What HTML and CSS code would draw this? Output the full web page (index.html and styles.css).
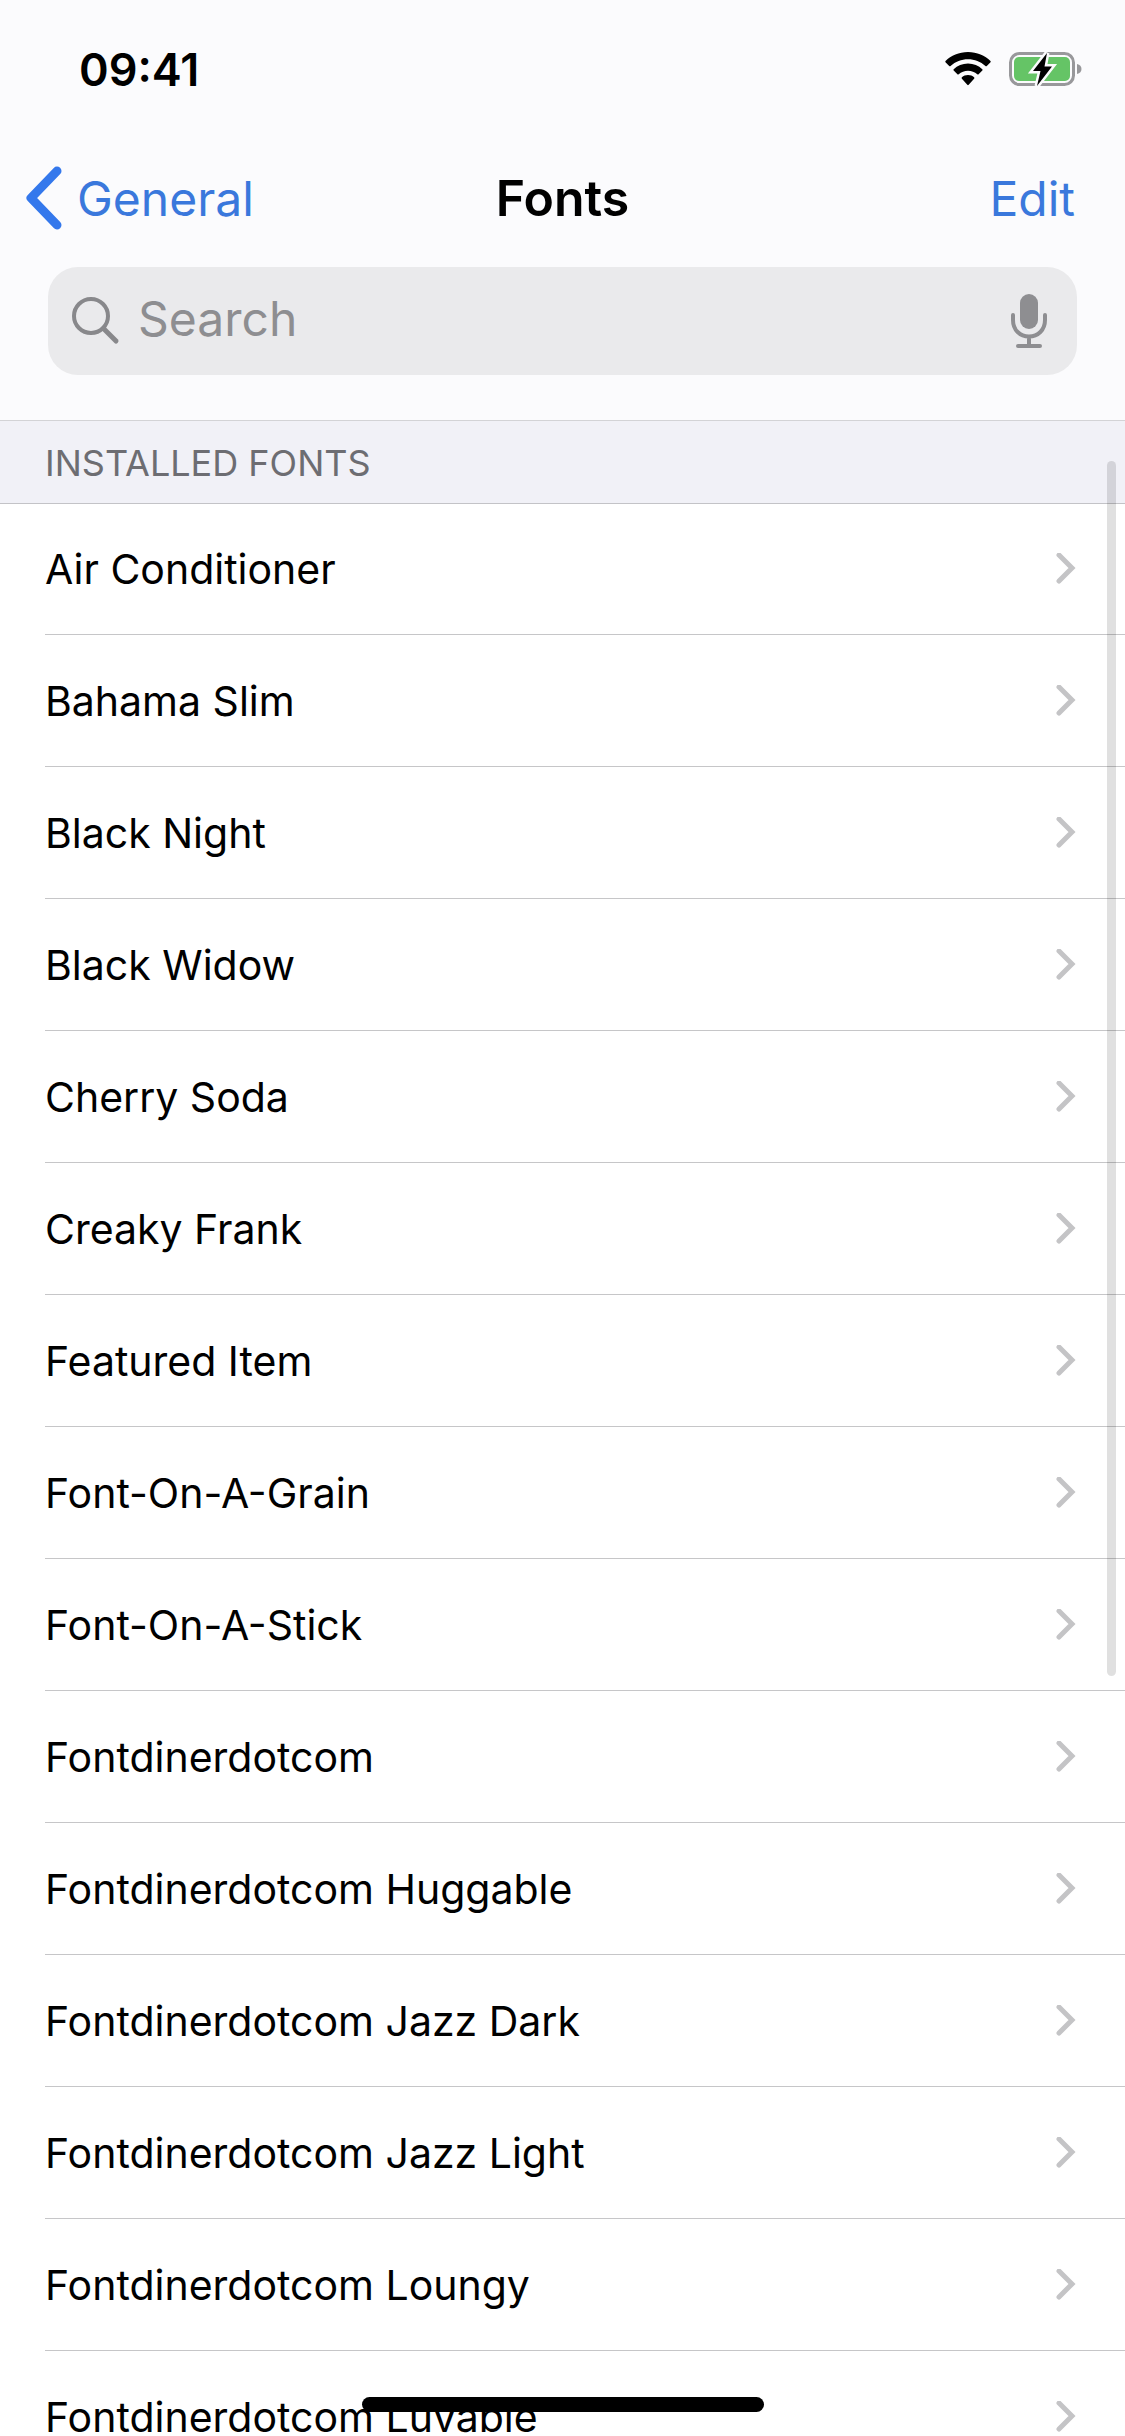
FILE: index.html
```html
<!DOCTYPE html>

<html lang="en">

<head>
    <meta charset="utf-8">
    <meta name="viewport" content="width=device-width, initial-scale=1">
    <title>Fonts</title>
    <link rel="stylesheet" href="styles.css">
</head>

<body>

    <svg class="hidden" width="0" height="0">
        <symbol id="chevron" viewBox="0 0 20 32">
            <path d="M3 2 L16 15 L3 28" fill="none" stroke="currentColor" stroke-width="5" stroke-linecap="round" />
        </symbol>
    </svg>

    <div class="screen">

        <header>
            <div class="status">
                <span class="time">09:41</span>
                <div class="status-icons">
                    <svg class="wifi" viewBox="0 0 46 34">
                        <path d="M23 0 C14 0 6 3.500 .5 9 Q0 9.700 .5 10.300 L4.200 14 Q4.900 14.600 5.600 14 C10.400 9.700 16.400 7.300 23 7.300 S35.600 9.700 40.400 14 Q41.100 14.600 41.800 14 L45.500 10.300 Q46 9.700 45.500 9 C40 3.500 32 0 23 0Z" />
                        <path d="M23 11.500 C17.400 11.500 12.400 13.600 8.700 17.200 Q8 17.900 8.700 18.600 L12.400 22.200 Q13 22.800 13.700 22.200 C16.300 20 19.500 18.800 23 18.800 S29.700 20 32.300 22.200 Q33 22.800 33.600 22.200 L37.300 18.600 Q38 17.900 37.300 17.200 C33.600 13.600 28.600 11.500 23 11.500Z" />
                        <path d="M23 23 C20.500 23 18.500 23.900 16.900 25.300 Q16.200 26 16.900 26.700 L22.300 32.800 Q23 33.500 23.700 32.800 L29.100 26.700 Q29.800 26 29.100 25.300 C27.500 23.900 25.500 23 23 23Z" />
                    </svg>
                    <svg class="battery" viewBox="0 0 74 36">
                        <rect x="1.500" y="2.500" width="63" height="31" rx="9" fill="none" stroke="#98989b" stroke-width="3" />
                        <path d="M68 13 C74 14 74 22 68 23Z" fill="#98989b" />
                        <rect x="5" y="6" width="56" height="24" rx="5" fill="#65c466" />
                        <path class="bolt" d="M38 2 L24 20 H31.500 L28 35 L43 15.500 H35.500Z" />
                    </svg>
                </div>
            </div>

            <nav>
                <a href="#general" class="back">
                    <svg class="back-arrow" viewBox="0 0 38 64">
                        <path d="M32 5 L6 32 L32 59" fill="none" stroke="#3478ec" stroke-width="9" stroke-linecap="round" stroke-linejoin="round" />
                    </svg>
                    <span>General</span>
                </a>
                <h1>Fonts</h1>
                <button type="button" class="edit">Edit</button>
            </nav>

            <form class="search">
                <svg class="search-icon" viewBox="0 0 48 48">
                    <circle cx="19" cy="19" r="17" fill="none" stroke="currentColor" stroke-width="4" />
                    <path d="M31.500 31.500 L44 44" stroke="currentColor" stroke-width="5" stroke-linecap="round" />
                </svg>
                <input type="text" name="search" placeholder="Search" aria-label="Search">
                <button type="button" class="mic" aria-label="Dictate">
                    <svg viewBox="0 0 36 54">
                        <rect x="9" y="0" width="18" height="35" rx="9" fill="currentColor" />
                        <path d="M2 21 V26 C2 36 9 42.500 18 42.500 S34 36 34 26 V21 M18 43 V52 M7 52 H29" fill="none" stroke="currentColor" stroke-width="4" stroke-linecap="round" />
                    </svg>
                </button>
            </form>
        </header>

        <main>
            <h2>INSTALLED FONTS</h2>
            <ul class="fonts">
                <li><a href="#">Air Conditioner <svg><use href="#chevron" /></svg></a></li>
                <li><a href="#">Bahama Slim <svg><use href="#chevron" /></svg></a></li>
                <li><a href="#">Black Night <svg><use href="#chevron" /></svg></a></li>
                <li><a href="#">Black Widow <svg><use href="#chevron" /></svg></a></li>
                <li><a href="#">Cherry Soda <svg><use href="#chevron" /></svg></a></li>
                <li><a href="#">Creaky Frank <svg><use href="#chevron" /></svg></a></li>
                <li><a href="#">Featured Item <svg><use href="#chevron" /></svg></a></li>
                <li><a href="#">Font-On-A-Grain <svg><use href="#chevron" /></svg></a></li>
                <li><a href="#">Font-On-A-Stick <svg><use href="#chevron" /></svg></a></li>
                <li><a href="#">Fontdinerdotcom <svg><use href="#chevron" /></svg></a></li>
                <li><a href="#">Fontdinerdotcom Huggable <svg><use href="#chevron" /></svg></a></li>
                <li><a href="#">Fontdinerdotcom Jazz Dark <svg><use href="#chevron" /></svg></a></li>
                <li><a href="#">Fontdinerdotcom Jazz Light <svg><use href="#chevron" /></svg></a></li>
                <li><a href="#">Fontdinerdotcom Loungy <svg><use href="#chevron" /></svg></a></li>
                <li><a href="#">Fontdinerdotcom Luvable <svg><use href="#chevron" /></svg></a></li>
            </ul>
            <div class="scrollbar"></div>
        </main>

        <div class="home-bar"></div>

    </div>

</body>

</html>
```
FILE: styles.css
```css
* {
    box-sizing: border-box;
}

body {
    margin: 0;
    background-color: white;
    color: black;
    font-family: Inter, "Liberation Sans", sans-serif;
}

h1, h2, ul {
    margin: 0;
    padding: 0;
}

a {
    color: inherit;
    text-decoration: none;
}

button {
    border: none;
    padding: 0;
    background: none;
    font-family: inherit;
}

svg {
    display: block;
    flex: none;
}

.hidden {
    position: absolute;
}

.screen {
    position: relative;
    display: flex;
    flex-direction: column;
    height: 100vh;
    overflow: hidden;
}

/* top bar */
header {
    flex: none;
    padding-bottom: 45px;
    background-color: #fbfbfd;
    border-bottom: 1px solid #d3d3d6;
}

.status {
    display: flex;
    justify-content: space-between;
    align-items: center;
    height: 138px;
    padding: 0 42px 0 79px;
}

.time {
    font-size: 45px;
    font-weight: 600;
}

.status-icons {
    display: flex;
    align-items: center;
    gap: 18px;
}

.wifi {
    width: 46px;
    height: 34px;
}

.battery {
    width: 74px;
    height: 36px;
}

.bolt {
    stroke: #fbfbfd;
    stroke-width: 5px;
    paint-order: stroke;
}

nav {
    display: grid;
    grid-template-columns: 1fr auto 1fr;
    align-items: center;
    height: 120px;
    padding: 0 25px;
    margin-bottom: 9px;
    font-size: 48px;
}

.back {
    display: flex;
    align-items: center;
    gap: 14px;
    color: #3a78dc;
}

.back-arrow {
    width: 38px;
    height: 64px;
}

nav h1 {
    font-size: 50px;
    font-weight: 600;
}

.edit {
    justify-self: end;
    margin-right: 25px;
    font-size: 48px;
    color: #3a78dc;
}

.search {
    display: flex;
    align-items: center;
    height: 108px;
    margin: 0 48px;
    padding: 0 30px 0 24px;
    border-radius: 30px;
    background-color: #eaeaec;
    color: #88888b;
}

.search-icon {
    width: 48px;
    height: 48px;
}

.search input {
    flex: 1;
    min-width: 0;
    margin-left: 18px;
    padding: 0 0 5px;
    border: none;
    outline: none;
    background: none;
    font-family: inherit;
    font-size: 48px;
}

.search input::placeholder {
    color: #8e8e91;
    opacity: 1;
}

.mic {
    color: #8e8e91;
}

.mic svg {
    width: 36px;
    height: 54px;
}

/* list */
main {
    position: relative;
    flex: 1;
    min-height: 0;
}

h2 {
    height: 83px;
    padding-left: 45px;
    border-bottom: 1px solid #c3c3c7;
    background-color: #f1f1f7;
    color: #6d6d72;
    font-size: 36px;
    font-weight: 400;
    line-height: 84px;
}

.fonts {
    list-style: none;
}

.fonts li {
    height: 132px;
    margin-left: 45px;
    border-bottom: 1px solid #c6c6c8;
}

.fonts li:first-child {
    height: 131px;
}

.fonts a {
    display: flex;
    justify-content: space-between;
    align-items: center;
    height: 100%;
    padding-right: 49px;
    font-size: 41px;
}

.fonts svg {
    width: 20px;
    height: 32px;
    color: #c4c4c6;
}

.scrollbar {
    position: absolute;
    top: 40px;
    right: 9px;
    width: 9px;
    height: 1215px;
    border-radius: 5px;
    background-color: rgba(0, 0, 0, 0.12);
}

.home-bar {
    position: absolute;
    bottom: 24px;
    left: 50%;
    width: 402px;
    height: 15px;
    margin-left: -201px;
    border-radius: 8px;
    background-color: black;
}
```
